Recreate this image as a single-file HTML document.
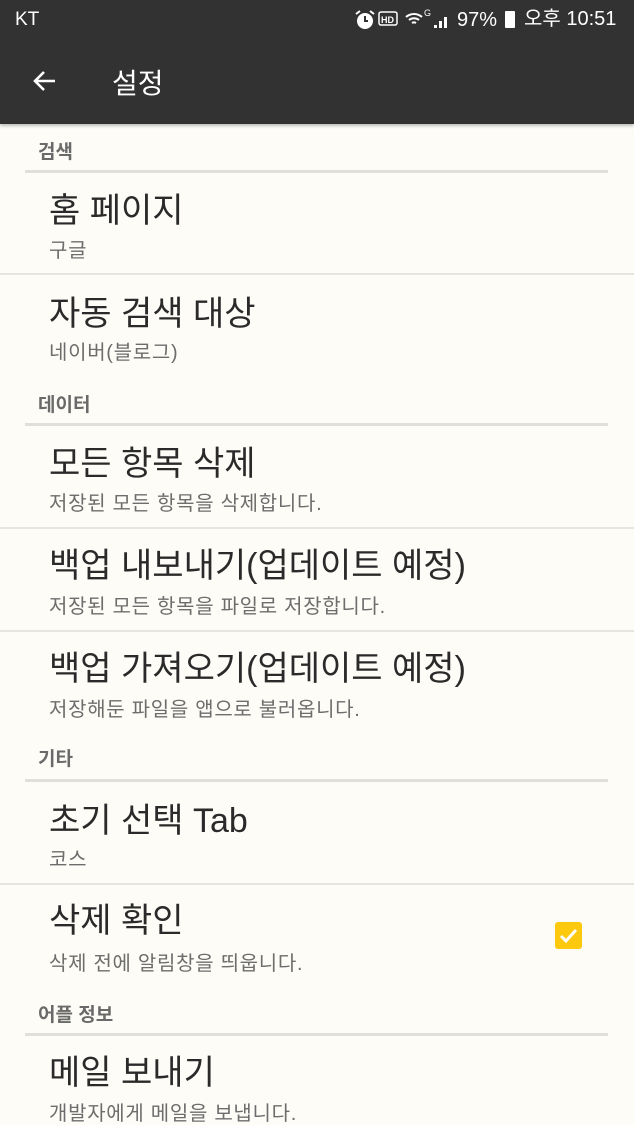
<!DOCTYPE html>
<html><head><meta charset="utf-8"><style>
*{margin:0;padding:0;box-sizing:border-box}
body{width:634px;height:1125px;overflow:hidden;background:#fdfcf6;font-family:"Liberation Sans","Noto Sans CJK KR",sans-serif;position:relative}
.sb{position:absolute;left:0;top:0;width:634px;height:40px;background:#323232;color:#fff}
.ab{position:absolute;left:0;top:40px;width:634px;height:84px;background:#323232;box-shadow:0 2px 3px rgba(0,0,0,.25)}
.t{position:absolute;white-space:nowrap;line-height:1}
.cat{position:absolute;left:38px;font-size:19px;font-weight:bold;color:#6a6a6a;line-height:1;margin-top:2px}
.ti{position:absolute;left:49px;font-size:34px;color:#2a2a2a;line-height:1;white-space:nowrap;margin-top:3px}
.su{position:absolute;left:49px;font-size:20px;letter-spacing:0.7px;color:#6d6d6d;line-height:1;white-space:nowrap;margin-top:2px}
.dv{position:absolute;left:25px;width:583px;height:3px;background:#e0dfd9}
.fd{position:absolute;left:0;width:634px;height:2px;background:#e6e5df}
</style></head><body>
<div class="sb">
<span class="t" style="left:15px;top:10px;font-size:19px;color:#fff">KT</span>
<svg style="position:absolute;left:354px;top:9px" width="22" height="22" viewBox="0 0 22 22"><circle cx="11" cy="12" r="8" fill="#fff"/><path d="M11 7v5h3" stroke="#323232" stroke-width="2" fill="none"/><path d="M2 5l4-3M20 5l-4-3" stroke="#fff" stroke-width="2"/></svg>
<svg style="position:absolute;left:378px;top:11px" width="22" height="18"><rect x="1" y="1" width="18" height="13" rx="2" fill="none" stroke="#fff" stroke-width="1.5"/><text x="3" y="12" font-size="9" fill="#fff" font-family="Liberation Sans" font-weight="bold">HD</text></svg>
<svg style="position:absolute;left:403px;top:8px" width="30" height="24"><path d="M3 9a12 12 0 0 1 16 0M6 12a8 8 0 0 1 10 0M9 15a4 4 0 0 1 4 0" stroke="#fff" stroke-width="2" fill="none"/><text x="21" y="8" font-size="9" fill="#fff">G</text></svg>
<svg style="position:absolute;left:432px;top:11px" width="20" height="18"><path d="M2 17h3v-3h-3zM7 17h3v-7h-3zM12 17h3v-11h-3z" fill="#fff"/></svg>
<span class="t" style="left:457px;top:10px;font-size:20px;color:#fff">97%</span>
<div style="position:absolute;left:505px;top:11px;width:10px;height:17px;background:#fff;border-radius:1px"></div>
<span class="t" style="left:524px;top:9px;font-size:20px;color:#fff">오후 10:51</span>
</div>
<div class="ab">
<svg style="position:absolute;left:31px;top:27px" width="28" height="28" viewBox="0 0 28 28"><path d="M24 14H5M13 5l-9 9 9 9" stroke="#fff" stroke-width="2.6" fill="none"/></svg>
<span class="t" style="left:112px;top:30px;font-size:28px;color:#fff">설정</span>
</div>

<span class="cat" style="top:141px">검색</span><div class="dv" style="top:170px"></div>
<span class="ti" style="top:191px">홈 페이지</span><span class="su" style="top:239px">구글</span>
<div class="fd" style="top:273px"></div>
<span class="ti" style="top:294px">자동 검색 대상</span><span class="su" style="top:341px">네이버(블로그)</span>

<span class="cat" style="top:394px">데이터</span><div class="dv" style="top:423px"></div>
<span class="ti" style="top:444px">모든 항목 삭제</span><span class="su" style="top:492px">저장된 모든 항목을 삭제합니다.</span>
<div class="fd" style="top:527px"></div>
<span class="ti" style="top:546px">백업 내보내기(업데이트 예정)</span><span class="su" style="top:595px">저장된 모든 항목을 파일로 저장합니다.</span>
<div class="fd" style="top:630px"></div>
<span class="ti" style="top:649px">백업 가져오기(업데이트 예정)</span><span class="su" style="top:698px">저장해둔 파일을 앱으로 불러옵니다.</span>

<span class="cat" style="top:748px">기타</span><div class="dv" style="top:779px"></div>
<span class="ti" style="top:801px">초기 선택 Tab</span><span class="su" style="top:848px">코스</span>
<div class="fd" style="top:883px"></div>
<span class="ti" style="top:901px">삭제 확인</span><span class="su" style="top:952px">삭제 전에 알림창을 띄웁니다.</span>
<div style="position:absolute;left:555px;top:922px;width:27px;height:27px;background:#fcc90e;border-radius:3px"></div>
<svg style="position:absolute;left:555px;top:922px" width="27" height="27"><path d="M6 14l5 5 10-11" stroke="#fff" stroke-width="3" fill="none"/></svg>

<span class="cat" style="top:1004px">어플 정보</span><div class="dv" style="top:1033px"></div>
<span class="ti" style="top:1053px">메일 보내기</span><span class="su" style="top:1102px">개발자에게 메일을 보냅니다.</span>
</body></html>
